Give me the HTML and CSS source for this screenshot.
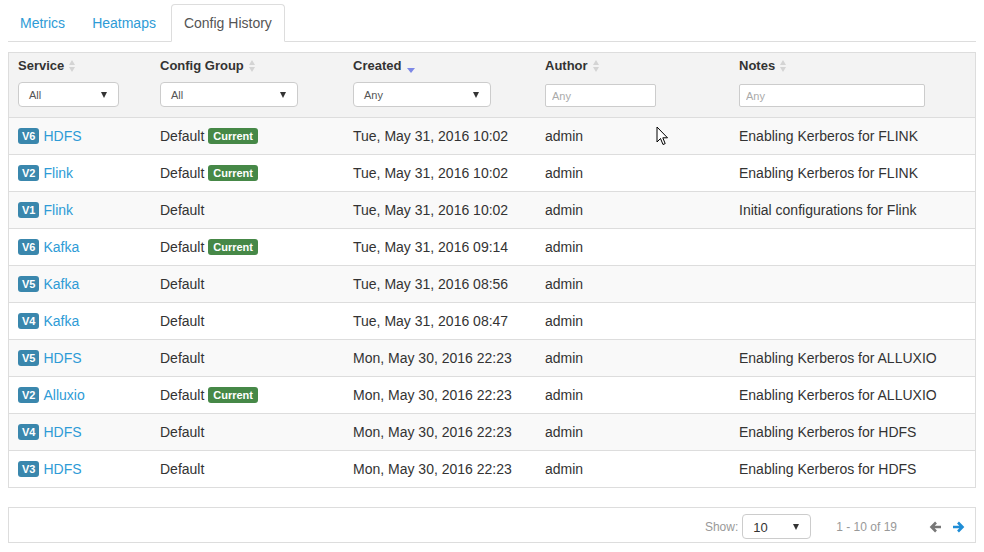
FILE: index.html
```html
<!DOCTYPE html>
<html>
<head>
<meta charset="utf-8">
<link rel="stylesheet" href="styles.css">
</head>
<body>
<div class="page">
  <ul class="tabs">
    <li><a>Metrics</a></li>
    <li><a>Heatmaps</a></li>
    <li class="active"><a>Config History</a></li>
  </ul>

  <table class="grid">
    <colgroup>
      <col class="c1"><col class="c2"><col class="c3"><col class="c4"><col class="c5">
    </colgroup>
    <thead>
      <tr>
        <th><div class="label">Service <span class="sort"></span></div>
          <div class="select w101"><span>All</span><i class="caret"></i></div></th>
        <th><div class="label">Config Group <span class="sort"></span></div>
          <div class="select w138"><span>All</span><i class="caret"></i></div></th>
        <th><div class="label">Created <span class="sort-desc"></span></div>
          <div class="select w138"><span>Any</span><i class="caret"></i></div></th>
        <th><div class="label">Author <span class="sort"></span></div>
          <input class="filter w111" placeholder="Any"></th>
        <th><div class="label">Notes <span class="sort"></span></div>
          <input class="filter w186" placeholder="Any"></th>
      </tr>
    </thead>
    <tbody>
      <tr><td><span class="ver">V6</span><a>HDFS</a></td><td>Default <span class="cur">Current</span></td><td>Tue, May 31, 2016 10:02</td><td>admin</td><td>Enabling Kerberos for FLINK</td></tr>
      <tr><td><span class="ver">V2</span><a>Flink</a></td><td>Default <span class="cur">Current</span></td><td>Tue, May 31, 2016 10:02</td><td>admin</td><td>Enabling Kerberos for FLINK</td></tr>
      <tr><td><span class="ver">V1</span><a>Flink</a></td><td>Default</td><td>Tue, May 31, 2016 10:02</td><td>admin</td><td>Initial configurations for Flink</td></tr>
      <tr><td><span class="ver">V6</span><a>Kafka</a></td><td>Default <span class="cur">Current</span></td><td>Tue, May 31, 2016 09:14</td><td>admin</td><td></td></tr>
      <tr><td><span class="ver">V5</span><a>Kafka</a></td><td>Default</td><td>Tue, May 31, 2016 08:56</td><td>admin</td><td></td></tr>
      <tr><td><span class="ver">V4</span><a>Kafka</a></td><td>Default</td><td>Tue, May 31, 2016 08:47</td><td>admin</td><td></td></tr>
      <tr><td><span class="ver">V5</span><a>HDFS</a></td><td>Default</td><td>Mon, May 30, 2016 22:23</td><td>admin</td><td>Enabling Kerberos for ALLUXIO</td></tr>
      <tr><td><span class="ver">V2</span><a>Alluxio</a></td><td>Default <span class="cur">Current</span></td><td>Mon, May 30, 2016 22:23</td><td>admin</td><td>Enabling Kerberos for ALLUXIO</td></tr>
      <tr><td><span class="ver">V4</span><a>HDFS</a></td><td>Default</td><td>Mon, May 30, 2016 22:23</td><td>admin</td><td>Enabling Kerberos for HDFS</td></tr>
      <tr><td><span class="ver">V3</span><a>HDFS</a></td><td>Default</td><td>Mon, May 30, 2016 22:23</td><td>admin</td><td>Enabling Kerberos for HDFS</td></tr>
    </tbody>
  </table>

  <div class="footer">
    <span class="muted">Show:</span>
    <div class="select pager-select"><span>10</span><i class="caret"></i></div>
    <span class="muted range">1 - 10 of 19</span>
    <svg class="arrow prev" width="13" height="12" viewBox="0 0 13 12"><path d="M12 6H3M7 1.5L2.5 6L7 10.5" fill="none" stroke="#777" stroke-width="2.6" stroke-linejoin="miter"/></svg>
    <svg class="arrow next" width="13" height="12" viewBox="0 0 13 12"><path d="M1 6H10M6 1.5L10.5 6L6 10.5" fill="none" stroke="#1f8dd6" stroke-width="2.6" stroke-linejoin="miter"/></svg>
  </div>

  <svg class="cursor" width="13" height="20" viewBox="0 0 13 20"><path d="M1 1V16L4.5 12.5L7 18.5L9.2 17.6L6.8 11.8H11.5Z" fill="#fff" stroke="#000" stroke-width="1" stroke-linejoin="round"/></svg>
</div>
</body>
</html>
```

FILE: styles.css
```css
* { box-sizing: border-box; }
html, body { margin: 0; padding: 0; background: #fff; }
body {
  font-family: "Liberation Sans", Arial, Helvetica, sans-serif;
  font-size: 14px;
  color: #333;
}
.page { position: relative; padding: 4px 8px 0 8px; }

.tabs {
  display: flex;
  list-style: none;
  margin: 0;
  padding: 0;
  border-bottom: 1px solid #ddd;
}
.tabs li { margin-bottom: -1px; margin-right: 3px; }
.tabs a {
  display: block;
  padding: 8px 11px;
  line-height: 20px;
  border: 1px solid transparent;
  border-radius: 4px 4px 0 0;
  color: #2e9bd6;
}
.tabs .active a {
  color: #555;
  background: #fff;
  padding: 8px 12px;
  border-color: #ddd #ddd transparent #ddd;
}

.grid {
  margin-top: 10px;
  width: 968px;
  table-layout: fixed;
  border-collapse: separate;
  border-spacing: 0;
  border: 1px solid #ddd;
}
.c1 { width: 142px; } .c2 { width: 193px; } .c3 { width: 192px; } .c4 { width: 194px; } .c5 { width: 245px; }

.grid th {
  background: #f3f3f3;
  text-align: left;
  vertical-align: top;
  padding: 5px 9px 10px 9px;
  font-weight: normal;
}
.label {
  font-size: 13px;
  font-weight: bold;
  line-height: 16px;
  height: 16px;
  display: flex;
  align-items: center;
  color: #333;
}
.sort {
  display: inline-block;
  position: relative;
  width: 7px;
  height: 12px;
  margin-left: 5px;
}
.sort::before, .sort::after {
  content: "";
  position: absolute;
  left: 0;
  border-left: 3.5px solid transparent;
  border-right: 3.5px solid transparent;
}
.sort::before { top: 0; border-bottom: 5px solid #d4d4d4; }
.sort::after { bottom: 0; border-top: 5px solid #d4d4d4; }
.sort-desc {
  display: inline-block;
  width: 0; height: 0;
  margin-left: 6px;
  margin-top: 8px;
  border-left: 4px solid transparent;
  border-right: 4px solid transparent;
  border-top: 5px solid #7d88e6;
}

.select {
  margin-top: 8px;
  height: 25px;
  background: #fff;
  border: 1px solid #ccc;
  border-radius: 4px;
  display: flex;
  align-items: center;
  justify-content: space-between;
  padding: 1px 11px 0 10px;
  font-size: 11px;
  color: #555;
}
.caret {
  width: 0; height: 0;
  border-left: 3.5px solid transparent;
  border-right: 3.5px solid transparent;
  border-top: 6px solid #333;
}
.w101 { width: 101px; }
.w138 { width: 138px; }
.filter {
  display: block;
  margin-top: 10px;
  height: 23px;
  border: 1px solid #ccc;
  border-radius: 2px;
  padding: 0 6px;
  font-family: inherit;
  font-size: 11px;
  color: #555;
  background: #fff;
  outline: none;
}
.filter::placeholder { color: #aaa; }
.w111 { width: 111px; }
.w186 { width: 186px; }

.grid td {
  padding: 8px 9px;
  line-height: 20px;
  border-top: 1px solid #ddd;
  white-space: nowrap;
  vertical-align: middle;
}
.grid tbody tr:nth-child(odd) td { background: #f9f9f9; }
.grid a { color: #2e9bd6; }

.ver, .cur {
  display: inline-block;
  font-size: 11px;
  font-weight: bold;
  color: #fff;
  line-height: 16px;
  border-radius: 3px;
  vertical-align: 1px;
}
.ver { background: #3a87ad; padding: 0 4px; margin-right: 4px; }
.cur { background: #468847; padding: 0 5px; }

.footer {
  margin-top: 19px;
  width: 968px;
  height: 36px;
  border: 1px solid #ddd;
  display: flex;
  align-items: center;
  justify-content: flex-end;
  padding: 3px 10px 0 10px;
  font-size: 12px;
}
.muted { color: #999; }
.pager-select {
  margin: 0 0 0 4px;
  width: 69px;
  height: 25px;
  font-size: 13px;
  color: #333;
}
.range { margin-left: 25px; margin-right: 32px; }
.arrow { display: block; }
.next { margin-left: 10px; }

.cursor { position: absolute; left: 656px; top: 126px; }
```
